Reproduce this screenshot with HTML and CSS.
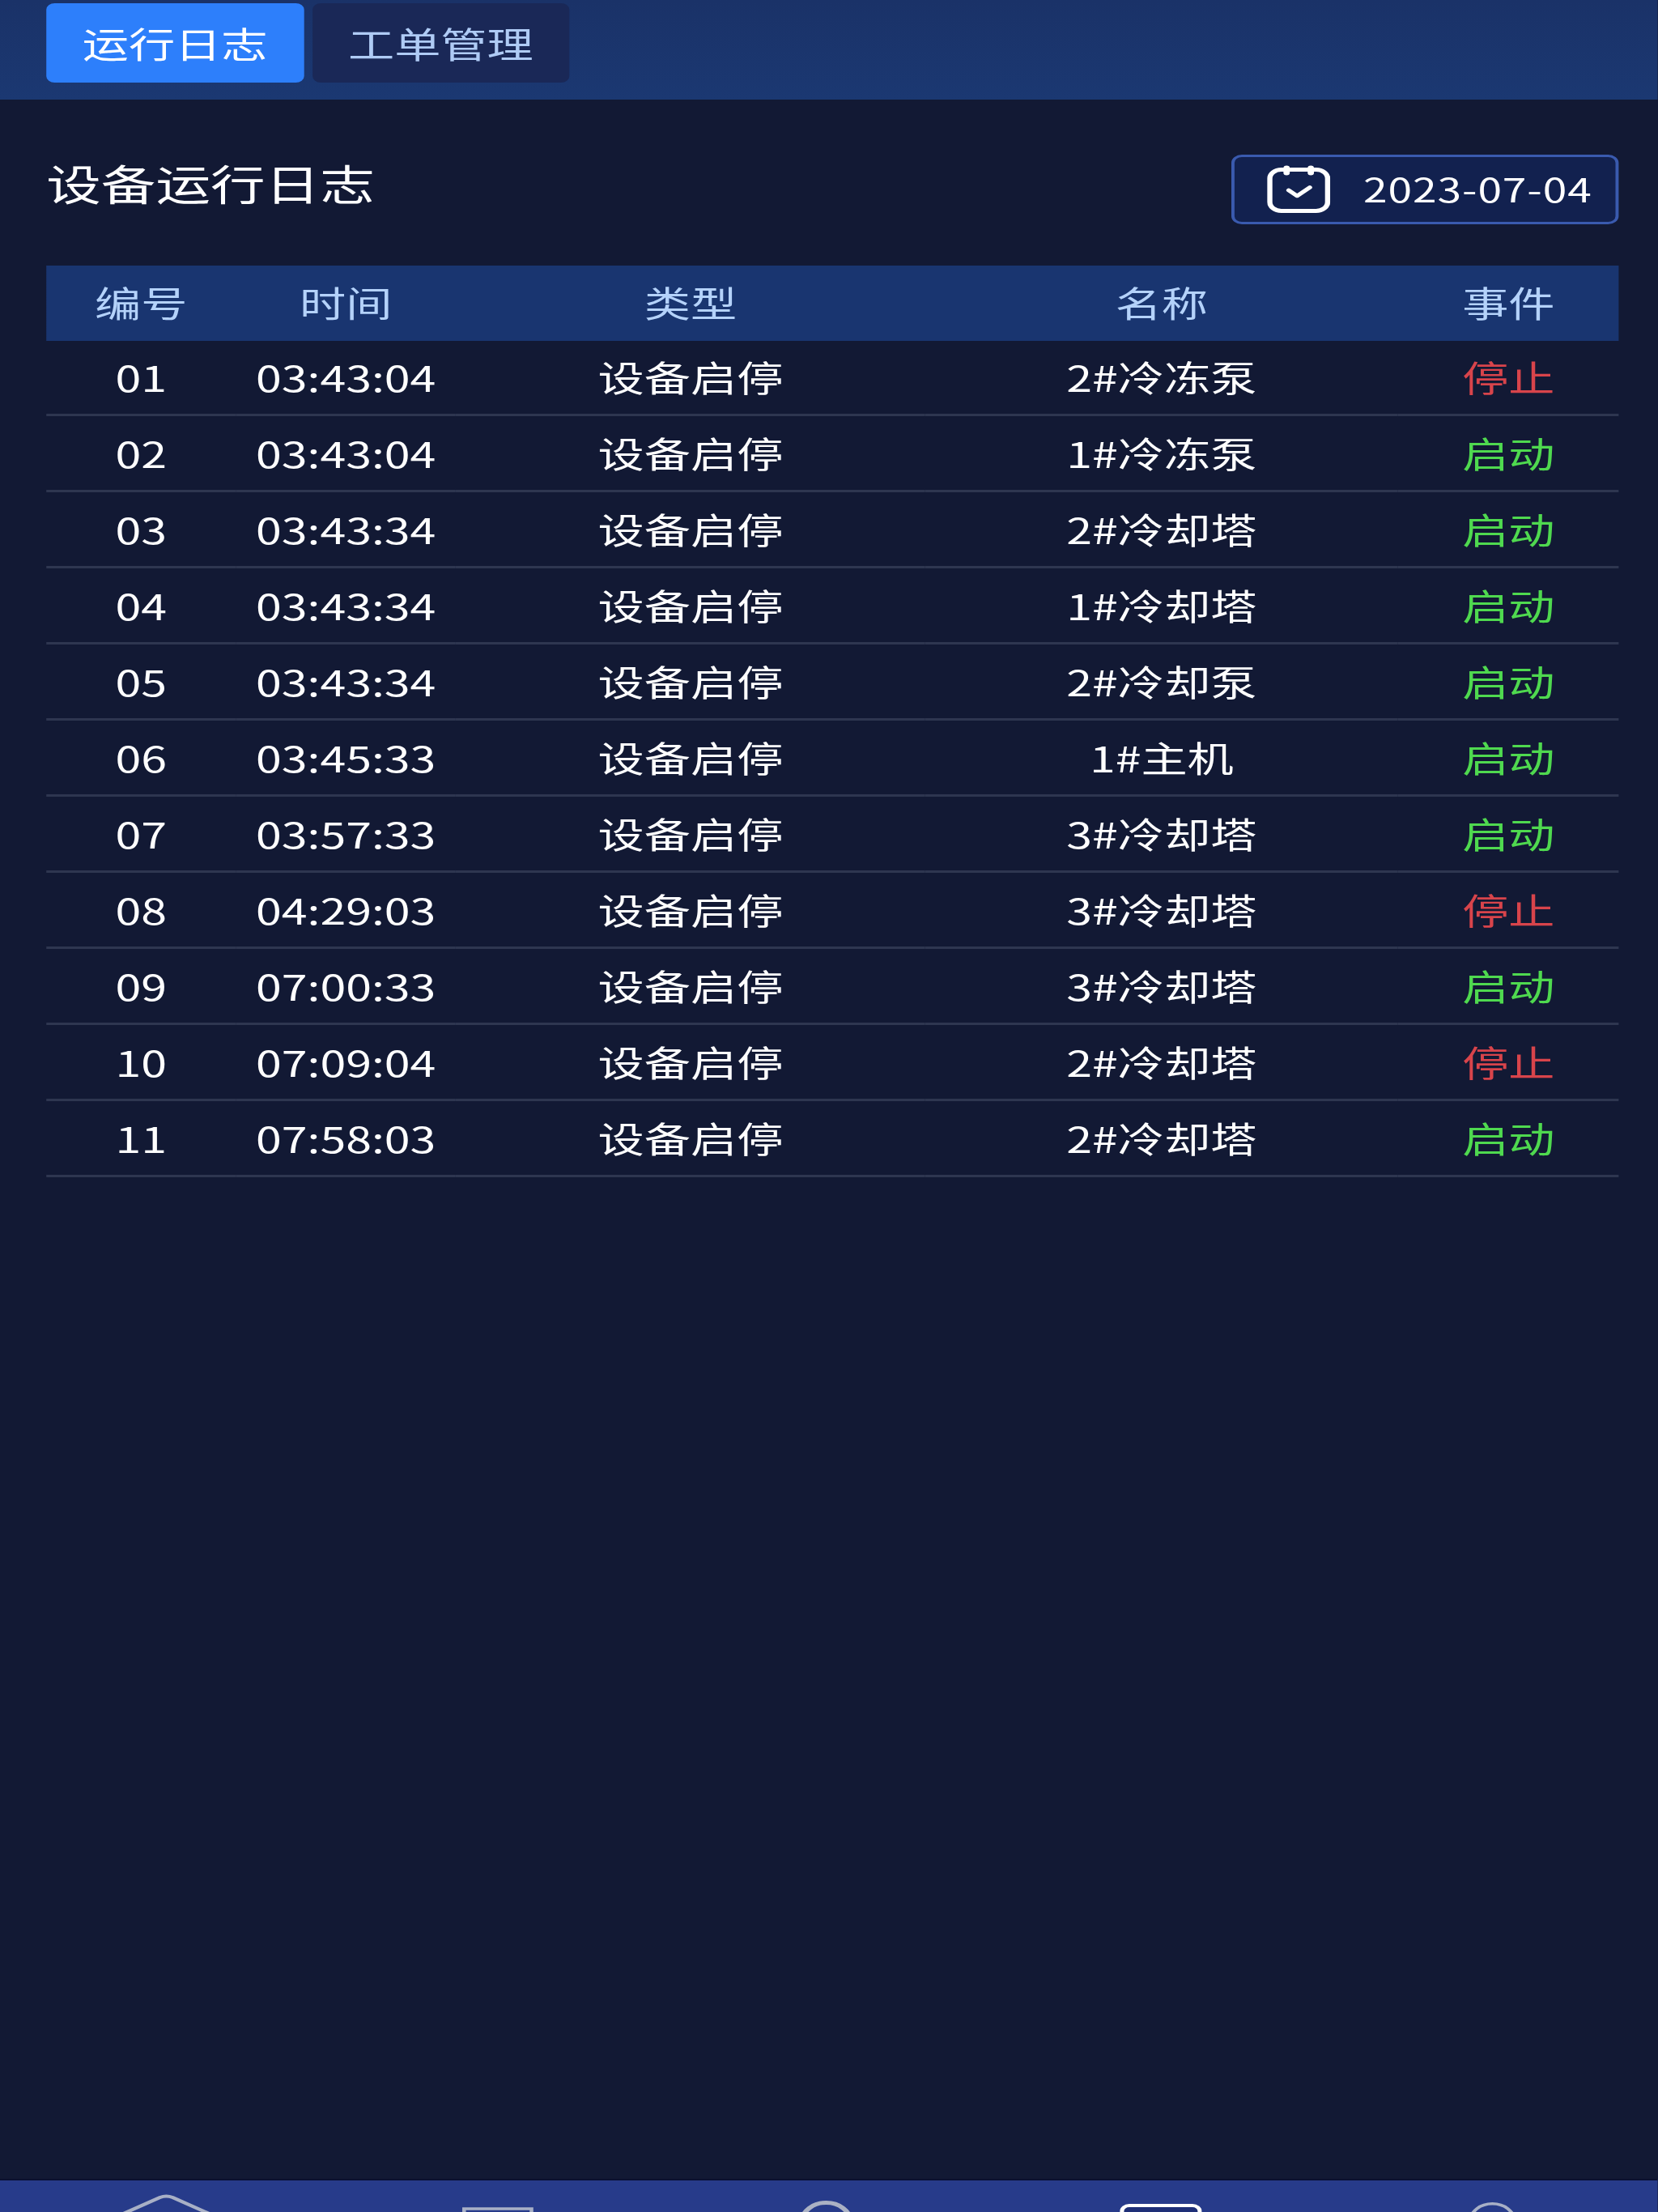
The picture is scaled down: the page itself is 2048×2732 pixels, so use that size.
FILE: index.html
```html
<!DOCTYPE html>
<html lang="zh-CN">
<head>
    <meta charset="UTF-8">
    <title>设备运行日志</title>
    <link rel="stylesheet" href="styles.css">
</head>
<body>
<div class="page">
    <div class="topbar">
        <div class="tab tab-active">运行日志</div>
        <div class="tab">工单管理</div>
    </div>

    <div class="main">
        <div class="title-row">
            <div class="title">设备运行日志</div>
            <div class="date-box">
                <svg class="cal-icon" viewBox="0 0 60 60" fill="none" stroke="#fff" stroke-width="5" stroke-linecap="round" stroke-linejoin="round">
                    <rect x="2.5" y="5.5" width="55" height="51" rx="11"/>
                    <path d="M18.5 3.5v6M41.5 3.5v6" stroke-width="6"/>
                    <path d="M20.5 31l8 7L40.5 27.5" stroke-width="4.5"/>
                </svg>
                <span class="date-text">2023-07-04</span>
            </div>
        </div>

        <table class="log-table">
            <colgroup>
                <col class="col-no"><col class="col-time"><col class="col-type"><col class="col-name"><col class="col-event">
            </colgroup>
            <thead>
                <tr><th>编号</th><th>时间</th><th>类型</th><th>名称</th><th>事件</th></tr>
            </thead>
            <tbody>
                <tr><td>01</td><td>03:43:04</td><td>设备启停</td><td>2#冷冻泵</td><td class="stop">停止</td></tr>
                <tr><td>02</td><td>03:43:04</td><td>设备启停</td><td>1#冷冻泵</td><td class="start">启动</td></tr>
                <tr><td>03</td><td>03:43:34</td><td>设备启停</td><td>2#冷却塔</td><td class="start">启动</td></tr>
                <tr><td>04</td><td>03:43:34</td><td>设备启停</td><td>1#冷却塔</td><td class="start">启动</td></tr>
                <tr><td>05</td><td>03:43:34</td><td>设备启停</td><td>2#冷却泵</td><td class="start">启动</td></tr>
                <tr><td>06</td><td>03:45:33</td><td>设备启停</td><td>1#主机</td><td class="start">启动</td></tr>
                <tr><td>07</td><td>03:57:33</td><td>设备启停</td><td>3#冷却塔</td><td class="start">启动</td></tr>
                <tr><td>08</td><td>04:29:03</td><td>设备启停</td><td>3#冷却塔</td><td class="stop">停止</td></tr>
                <tr><td>09</td><td>07:00:33</td><td>设备启停</td><td>3#冷却塔</td><td class="start">启动</td></tr>
                <tr><td>10</td><td>07:09:04</td><td>设备启停</td><td>2#冷却塔</td><td class="stop">停止</td></tr>
                <tr><td>11</td><td>07:58:03</td><td>设备启停</td><td>2#冷却塔</td><td class="start">启动</td></tr>
            </tbody>
        </table>
    </div>

    <div class="tabbar">
        <div class="tabbar-item">
            <svg class="nav-icon nav-home" viewBox="0 0 160 24" fill="none" stroke="#a8b0c6" stroke-width="4" stroke-linejoin="round">
                <path d="M8 42L74 4q6-3 12 0l66 38"/>
            </svg>
        </div>
        <div class="tabbar-item">
            <svg class="nav-icon nav-doc" viewBox="0 0 68 9" fill="none" stroke="#a8b0c6" stroke-width="3.5">
                <path d="M2 9V2h64v7"/>
            </svg>
        </div>
        <div class="tabbar-item">
            <svg class="nav-icon nav-arc" viewBox="0 0 60 14" fill="none" stroke="#aab1c4" stroke-width="5">
                <circle cx="30" cy="25.2" r="22.7"/>
            </svg>
        </div>
        <div class="tabbar-item">
            <svg class="nav-icon nav-log" viewBox="0 0 78 10" fill="#1e2f77" stroke="#fff" stroke-width="4">
                <rect x="2" y="2" width="74" height="40" rx="7"/>
            </svg>
        </div>
        <div class="tabbar-item">
            <svg class="nav-icon nav-user" viewBox="0 0 44 12" fill="none" stroke="#a8b0c6" stroke-width="3.5">
                <circle cx="22" cy="22.5" r="20.7"/>
            </svg>
        </div>
    </div>
</div>
</body>
</html>
```

FILE: styles.css
```css
* {
    box-sizing: border-box;
}
html, body {
    margin: 0;
    padding: 0;
    overflow: hidden;
    background: #121934;
}
/* the capture is stretched sideways, so the whole page gets widened */
.page {
    width: 1575.4px;
    height: 2732px;
    transform: scaleX(1.3);
    transform-origin: 0 0;
    display: flex;
    flex-direction: column;
    font-family: "Noto Sans CJK SC", "Noto Sans", sans-serif;
    color: #fff;
    background: #121934;
}
.topbar {
    height: 123px;
    flex: none;
    display: flex;
    gap: 8px;
    padding: 4px 0 0 44px;
    background: linear-gradient(180deg, #1a3268, #1b3872);
}
.tab {
    width: 244.5px;
    height: 98px;
    display: flex;
    align-items: center;
    justify-content: center;
    border-radius: 8px;
    font-size: 44px;
    color: #afcbf5;
    background: #1a2857;
}
.tab-active {
    color: #fff;
    background: #2d7ffb;
}
.main {
    flex: 1;
    min-width: 0;
    padding: 68px 37px 0 44px;
}
.title-row {
    display: flex;
    justify-content: space-between;
    align-items: flex-start;
    margin-bottom: 51px;
}
.title {
    font-size: 52px;
    line-height: 70px;
}
.date-box {
    width: 368px;
    height: 86px;
    display: flex;
    align-items: center;
    gap: 31px;
    padding-left: 31px;
    border: 3px solid #3a5aae;
    border-radius: 10px;
    background: #12214f;
}
.cal-icon {
    width: 60px;
    height: 60px;
    flex: none;
}
.date-text {
    font-size: 41px;
    line-height: 44px;
    margin-top: -5px;
    letter-spacing: 0.7px;
}
.log-table {
    width: 100%;
    table-layout: fixed;
    border-collapse: separate;
    border-spacing: 0;
    background: linear-gradient(#193570, #193570) no-repeat 0 0 / 100% 93px;
}
.col-no { width: 180px; }
.col-time { width: 209px; }
.col-type { width: 446px; }
.col-name { width: 449px; }
.col-event { width: 210px; }
.log-table th {
    height: 92px;
    padding: 0 0 2px;
    font-size: 44px;
    font-weight: 400;
    color: #b4d2fa;
}
.log-table td {
    height: 94px;
    padding: 0 0 2px;
    text-align: center;
    font-size: 44px;
    border-bottom: 3px solid #2e3650;
}
.log-table .stop {
    color: #d8444b;
}
.log-table .start {
    color: #4fd94f;
}
.tabbar {
    height: 41px;
    flex: none;
    display: flex;
    overflow: hidden;
    border-top: 2px solid #0a1030;
    background: #273b8a;
}
.tabbar-item {
    flex: 1;
    display: flex;
    justify-content: center;
    align-items: flex-start;
}
.nav-icon {
    display: block;
    flex: none;
}
.nav-home {
    width: 160px;
    height: 24px;
    margin-top: 17px;
}
.nav-doc {
    width: 68px;
    height: 9px;
    margin-top: 33px;
}
.nav-arc {
    width: 60px;
    height: 14px;
    margin-top: 25px;
    margin-left: -6px;
}
.nav-log {
    width: 78px;
    height: 10px;
    margin-top: 29px;
}
.nav-user {
    width: 44px;
    height: 12px;
    margin-top: 27px;
}
```
